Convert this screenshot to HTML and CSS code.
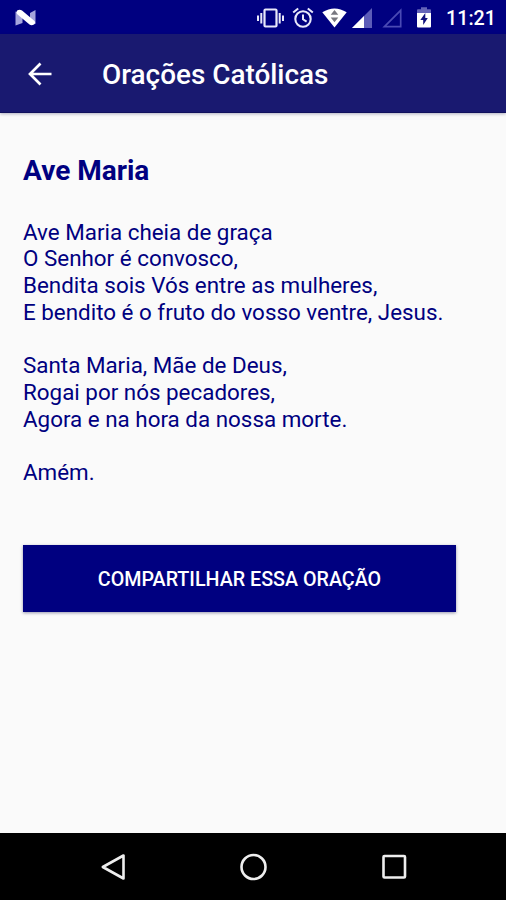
FILE: index.html
```html
<!DOCTYPE html>
<html lang="pt-BR">

<head>
    <meta charset="UTF-8">
    <meta name="viewport" content="width=device-width, initial-scale=1.0">
    <title>Orações Católicas</title>
    <link rel="stylesheet" href="styles.css">
</head>

<body>
    <div class="screen">
        <div class="status-bar">
            <svg class="logo" width="22" height="18" viewBox="0 0 22 18">
                <path d="M0.500 2.500 L7.500 6 V14 L0.500 16.500 Z M15 4 L20.500 1 V15 L15 12 Z" fill="#a5a5dc" />
                <path d="M2.500 1.200 Q5 0 7 1.500 L19.500 12 Q21 14 19 15.500 Q16.500 17 14.500 15.500 L2 5 Q0.500 3 2.500 1.200 Z" fill="#fff" />
            </svg>
            <div class="status-icons">
                <!-- vibrate -->
                <svg width="27" height="20" viewBox="0 0 27 20">
                    <rect x="7.500" y="1.500" width="12" height="17" rx="1" fill="none" stroke="#e8e8fa" stroke-width="2.200" />
                    <path d="M1 7.500 V13 M4.300 5 V15.500 M22.700 5 V15.500 M26 7.500 V13" stroke="#e8e8fa" stroke-width="2" />
                </svg>
                <!-- alarm -->
                <svg width="22" height="22" viewBox="0 0 22 22">
                    <circle cx="11" cy="12" r="7.700" fill="none" stroke="#e8e8fa" stroke-width="2.100" />
                    <path d="M1.200 5.600 L6.200 1.400 M20.800 5.600 L15.800 1.400 M11 7.500 V12.300 L14.600 14.600" fill="none" stroke="#e8e8fa" stroke-width="2" />
                </svg>
                <!-- wifi -->
                <svg width="25" height="20" viewBox="0 0 25 20">
                    <path d="M0.300 4.300 Q12.500 -3.300 24.700 4.300 L12.500 19.500 Z" fill="#fff" />
                    <path d="M12.500 2 L16.300 6.700 H8.700 Z M12.500 14.200 L8.700 9.500 H16.300 Z" fill="#77777f" />
                </svg>
                <!-- signal -->
                <svg class="signal" width="20" height="20" viewBox="0 0 20 20">
                    <path d="M0 20 L20 0 V20 Z" fill="#5c5cb8" />
                    <path d="M0 20 L12 8 V20 Z" fill="#fff" />
                </svg>
                <svg class="signal-empty" width="20" height="20" viewBox="0 0 20 20">
                    <path d="M2.400 18.700 L18.700 2.400 V18.700 Z" fill="none" stroke="#4a4ab4" stroke-width="1.700" />
                </svg>
                <!-- battery -->
                <svg class="battery" width="14" height="21" viewBox="0 0 14 21">
                    <path d="M0 6 V3 Q0 2.200 1 2.200 H4 V0.200 H10 V2.200 H13 Q14 2.200 14 3 V6 Z" fill="#6464b8" />
                    <path d="M0 6 H14 V19.500 Q14 20.500 13 20.500 H1 Q0 20.500 0 19.500 Z" fill="#fff" />
                    <path d="M8.300 6 L3.300 13 H6.200 V18 L10.800 11 H8.300 Z" fill="#10107c" />
                </svg>
                <span class="clock">11:21</span>
            </div>
        </div>

        <header class="app-bar">
            <svg class="back" width="24" height="24" viewBox="0 0 24 24">
                <path d="M12.500 1.500 L2 12 L12.500 22.500 M2 12 H23.500" fill="none" stroke="#fff" stroke-width="2.700" />
            </svg>
            <h1>Orações Católicas</h1>
        </header>

        <main class="content">
            <h2>Ave Maria</h2>
            <p>Ave Maria cheia de graça<br>
                O Senhor é convosco,<br>
                Bendita sois Vós entre as mulheres,<br>
                E bendito é o fruto do vosso ventre, Jesus.</p>
            <p>Santa Maria, Mãe de Deus,<br>
                Rogai por nós pecadores,<br>
                Agora e na hora da nossa morte.</p>
            <p>Amém.</p>
            <button class="share" type="button">COMPARTILHAR ESSA ORAÇÃO</button>
        </main>

        <nav class="nav-bar">
            <svg width="28" height="28" viewBox="0 0 28 28">
                <path d="M24.500 2.500 V25.500 L3.800 14 Z" fill="none" stroke="#eee" stroke-width="2.600" stroke-linejoin="round" />
            </svg>
            <svg width="28" height="28" viewBox="0 0 28 28">
                <circle cx="13.500" cy="14" r="12" fill="none" stroke="#eee" stroke-width="2.600" />
            </svg>
            <svg width="28" height="28" viewBox="0 0 28 28">
                <rect x="2.500" y="3" width="21.500" height="21.500" rx="1" fill="none" stroke="#eee" stroke-width="2.600" />
            </svg>
        </nav>
    </div>
</body>

</html>
```
FILE: styles.css
```css
* {
    box-sizing: border-box;
}

body {
    margin: 0;
    font-family: Roboto, sans-serif;
    background-color: #fafafa;
    color: #000080;
}

svg {
    display: block;
    flex: none;
}

.screen {
    display: flex;
    flex-direction: column;
    height: 900px;
    overflow: hidden;
}

.status-bar {
    display: flex;
    justify-content: space-between;
    align-items: center;
    height: 34px;
    padding: 0 10px 0 15px;
    background-color: #000080;
}

.logo {
    margin-top: 1px;
}

.status-icons {
    display: flex;
    align-items: center;
    gap: 8px;
    height: 34px;
    padding-top: 1px;
}

.signal {
    margin-left: -3px;
}

.signal-empty {
    margin-left: 2px;
}

.battery {
    margin-left: 7px;
}

.clock {
    width: 50px;
    margin-left: 7px;
    padding-top: 2px;
    color: #fff;
    font-size: 19.700px;
    font-weight: 500;
    line-height: 34px;
    white-space: nowrap;
}

.app-bar {
    display: flex;
    align-items: center;
    height: 79px;
    padding-left: 28px;
    background-color: #191970;
    border-bottom: 1px solid #10105c;
    box-shadow: 0 1px 3px rgba(0, 0, 60, 0.3);
}

.back {
    margin-top: 1px;
}

.app-bar h1 {
    margin: 2px 0 0 50px;
    color: #fff;
    font-size: 27.900px;
    font-weight: 500;
    line-height: 33px;
}

.content {
    flex: 1;
    padding: 41px 23px 0;
}

.content h2 {
    margin: 0 0 31.600px;
    font-size: 28px;
    font-weight: 700;
    line-height: 33px;
}

.content p {
    margin: 0 0 26.700px;
    font-size: 22.400px;
    line-height: 26.700px;
    white-space: nowrap;
}

.share {
    display: block;
    width: 433px;
    height: 67px;
    margin-top: 59.400px;
    padding: 2px 0 0;
    border: none;
    background-color: #000080;
    box-shadow: 0 1px 3px rgba(0, 0, 60, 0.4);
    color: #fff;
    font-family: inherit;
    font-size: 19.700px;
    font-weight: 500;
}

.nav-bar {
    display: flex;
    justify-content: center;
    align-items: center;
    gap: 113px;
    height: 67px;
    padding-left: 1px;
    background-color: #000;
}
```
